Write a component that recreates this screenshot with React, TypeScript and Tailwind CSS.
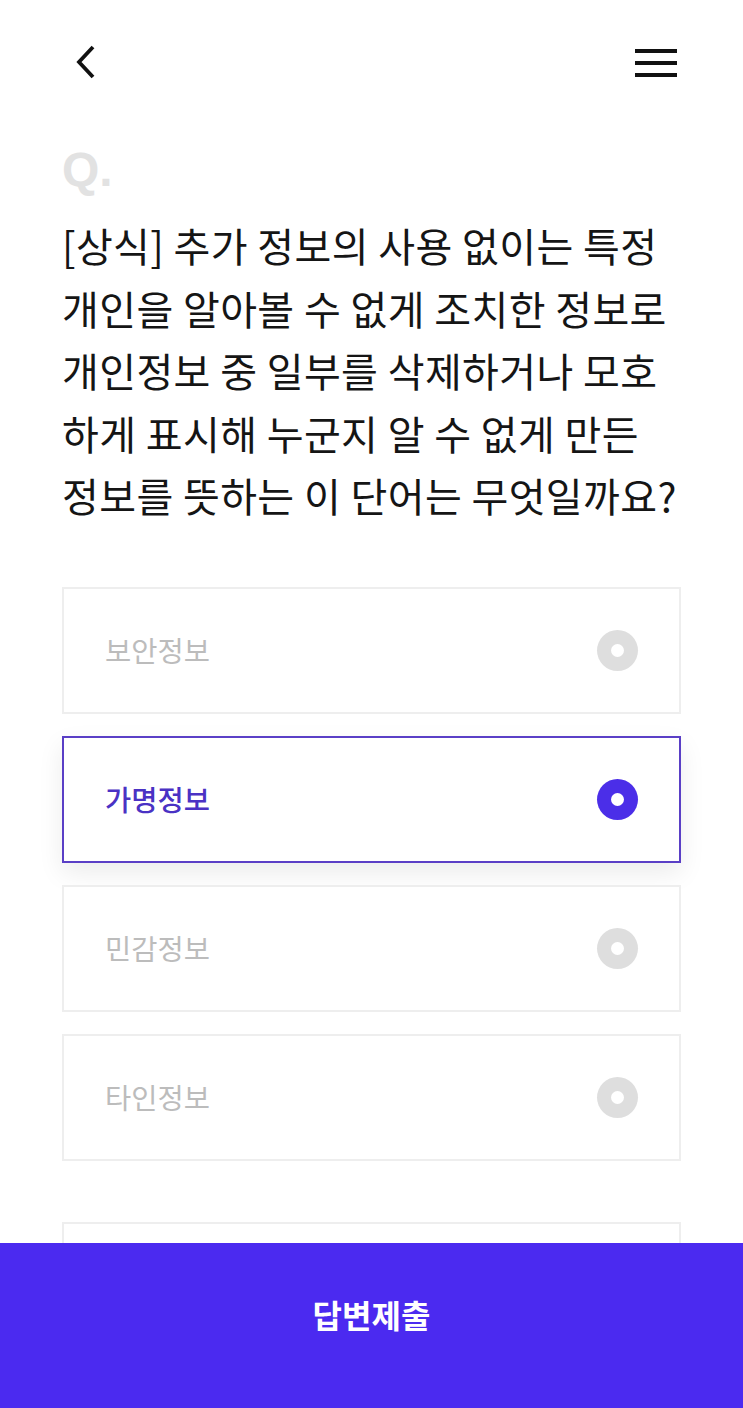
import React from "react";

const options = [
  { label: "보안정보", selected: false },
  { label: "가명정보", selected: true },
  { label: "민감정보", selected: false },
  { label: "타인정보", selected: false },
];

const lines = [
  "[상식] 추가 정보의 사용 없이는 특정",
  "개인을 알아볼 수 없게 조치한 정보로",
  "개인정보 중 일부를 삭제하거나 모호",
  "하게 표시해 누군지 알 수 없게 만든",
  "정보를 뜻하는 이 단어는 무엇일까요?",
];

function Radio({ selected }: { selected: boolean }) {
  return (
    <div
      className={
        selected
          ? "w-[41px] h-[41px] rounded-full bg-[#4b2ee8] flex items-center justify-center"
          : "w-[41px] h-[41px] rounded-full bg-[#dedede] flex items-center justify-center"
      }
    >
      <div className="w-[13px] h-[13px] rounded-full bg-white" />
    </div>
  );
}

export default function App() {
  return (
    <div
      className="relative w-full h-[1408px] overflow-hidden bg-white"
      style={{ fontFamily: '"Noto Sans CJK KR", "Noto Sans", sans-serif' }}
    >
      <header className="flex items-center justify-between pl-[74px] pr-[66px] pt-[44px]">
        <svg width="24" height="36" viewBox="0 0 24 36" fill="none">
          <path d="M19 3 L5 18 L19 33" stroke="#111" strokeWidth="3.8" strokeLinecap="butt" strokeLinejoin="miter" />
        </svg>
        <svg width="42" height="32" viewBox="0 0 42 32">
          <rect x="0" y="3" width="42" height="4" fill="#111" />
          <rect x="0" y="15" width="42" height="4" fill="#111" />
          <rect x="0" y="27" width="42" height="4" fill="#111" />
        </svg>
      </header>

      <main className="px-[62px]">
        <div
          className="mt-[66px] text-[48px] font-bold leading-none text-[#e2e2e2]"
          style={{ fontFamily: '"Liberation Sans", Arial, sans-serif' }}
        >
          Q.
        </div>
        <p className="mt-[20px] text-[40px] leading-[62.5px] tracking-[0.01em] text-[#151515]">
          {lines.map((l) => (
            <span key={l} className="block whitespace-nowrap">
              {l}
            </span>
          ))}
        </p>

        <div className="mt-[60px] flex flex-col gap-[22px]">
          {options.map((o) => (
            <div
              key={o.label}
              className={
                o.selected
                  ? "h-[127px] border-2 border-[#5a3fc6] bg-white flex items-center justify-between px-[41px] shadow-[0_10px_24px_rgba(0,0,0,0.08)]"
                  : "h-[127px] border-2 border-[#eeeeee] bg-white flex items-center justify-between px-[41px]"
              }
            >
              <span
                className={
                  o.selected
                    ? "text-[28.5px] font-medium text-[#4a32c4]"
                    : "text-[28.5px] text-[#bcbcbc]"
                }
              >
                {o.label}
              </span>
              <Radio selected={o.selected} />
            </div>
          ))}
          <div className="mt-[39px] h-[127px] border-2 border-[#eeeeee] bg-white" />
        </div>
      </main>

      <button className="absolute bottom-0 left-0 right-0 h-[165px] bg-[#4b2af0] flex items-center justify-center pb-[24px]">
        <span className="text-[32px] font-bold text-white">답변제출</span>
      </button>
    </div>
  );
}
